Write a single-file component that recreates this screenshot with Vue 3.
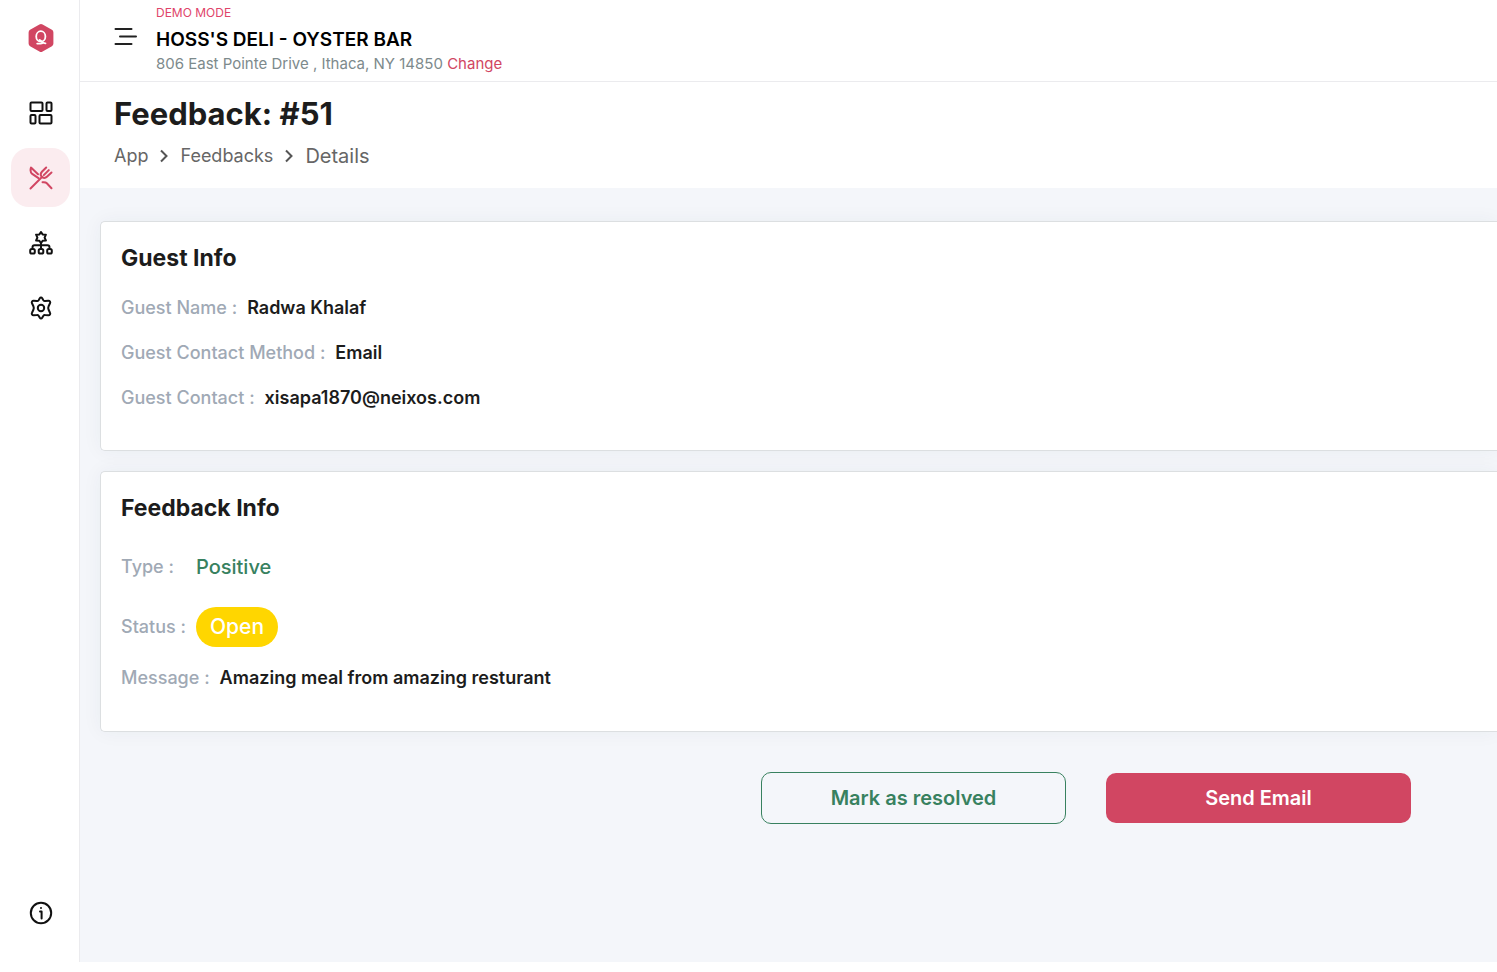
<template>
  <div class="page">
    <aside class="sidebar">
      <a href="#" class="logo" aria-label="Home">
        <svg width="28" height="30" viewBox="0 0 28 30">
          <path
            d="M12.4 1.6a3 3 0 0 1 3.2 0l9.3 5.2a3 3 0 0 1 1.5 2.6v11.2a3 3 0 0 1-1.5 2.6l-9.3 5.2a3 3 0 0 1-3.2 0l-9.3-5.2a3 3 0 0 1-1.5-2.6V9.4a3 3 0 0 1 1.5-2.6z"
            fill="#d14662"
          />
          <g fill="none" stroke="#fff" stroke-width="1.8" stroke-linecap="round">
            <ellipse cx="13.800" cy="13.400" rx="4.600" ry="5.200" />
            <path d="M10.200 20.600h3.600c1 0 1.800-.6 1.800-1.600M12.500 17c1.800 0 2.600 3.500 6 3.400" />
          </g>
        </svg>
      </a>
      <nav class="nav">
        <a href="#" class="nav-item" aria-label="Dashboard">
          <svg width="24" height="24" viewBox="0 0 24 24">
            <rect x="1.500" y="1.500" width="12" height="8.500" rx="1" />
            <rect x="17.500" y="1.500" width="5" height="8.500" rx="1" />
            <rect x="1.500" y="14" width="5" height="8.500" rx="1" />
            <rect x="10.500" y="14" width="12" height="8.500" rx="1" />
          </svg>
        </a>
        <a href="#" class="nav-item active" aria-label="Restaurant">
          <svg width="24" height="24" viewBox="0 0 24 24">
            <path d="M1.500 22.500 13 11" />
            <path d="m17.200 1.500-4.300 4.300c-1.500 1.600-1.500 3.600-.2 5s3.700 1.500 5.200 0l4.600-4.300" />
            <path d="m19.800 4.100-5 5" />
            <path d="M9.500 12.200 3.200 7.900C1.400 6.400 1.300 3.800 2 1.600l7 6.600" />
            <path d="M13.500 16.200c1.600.2 3.100-.2 4.300 1l4.700 5" />
          </svg>
        </a>
        <a href="#" class="nav-item" aria-label="Organization">
          <svg width="24" height="24" viewBox="0 0 24 24">
            <path
              d="m12 1 1.600 2.400 3.300.3-1.300 2.900 1.300 2.900-3.300.3L12 12.200l-1.600-2.400-3.300-.3 1.300-2.900-1.300-2.900 3.300-.3z"
            />
            <path d="M12 12v6M3.500 16.500c0-1.500.5-2.200 2-2.200h13c1.500 0 2 .7 2 2.200" />
            <rect x="1.200" y="18" width="4.600" height="4.600" rx="1.600" />
            <rect x="9.700" y="18" width="4.600" height="4.600" rx="1.600" />
            <rect x="18.200" y="18" width="4.600" height="4.600" rx="1.600" />
          </svg>
        </a>
        <a href="#" class="nav-item" aria-label="Settings">
          <svg width="24" height="24" viewBox="0 0 24 24">
            <path
              d="M10.800 2.200c.6-1 1.800-1 2.400 0l1.200 2c.4.600 1 .9 1.700.8l3.200-.3c1.500-.1 2.400 1.300 1.700 2.600l-1.400 2.900c-.4.900-.4 2.700 0 3.600l1.400 2.900c.7 1.300-.2 2.700-1.700 2.600l-3.200-.3c-.7-.1-1.300.2-1.700.8l-1.200 2c-.6 1-1.800 1-2.400 0l-1.200-2c-.4-.6-1-.9-1.700-.8l-3.200.3C3.200 19.400 2.300 18 3 16.700l1.400-2.900c.4-.9.4-2.700 0-3.600L3 7.300C2.300 6 3.200 4.600 4.700 4.700l3.200.3c.7.100 1.300-.2 1.700-.8z"
            />
            <circle cx="12" cy="12" r="3.200" />
          </svg>
        </a>
      </nav>
      <a href="#" class="nav-item info" aria-label="Information">
        <svg width="24" height="24" viewBox="0 0 24 24">
          <circle cx="12" cy="12" r="10.200" />
          <path d="M11 10.500h1.600V17.500M12 6.900v.2" />
        </svg>
      </a>
    </aside>

    <div class="main">
      <header class="topbar">
        <button type="button" class="menu-btn" aria-label="Toggle menu">
          <svg width="24" height="20" viewBox="0 0 24 20">
            <path d="M1.500 2h16M6 9.500h16M1.500 17h16" />
          </svg>
        </button>
        <div class="restaurant">
          <span class="mode">DEMO MODE</span>
          <strong class="name">HOSS'S DELI - OYSTER BAR</strong>
          <span class="address">
            806 East Pointe Drive , Ithaca, NY 14850
            <a href="#">Change</a>
          </span>
        </div>
      </header>

      <section class="title-bar">
        <h1>Feedback: #51</h1>
        <nav class="breadcrumb" aria-label="Breadcrumb">
          <a href="#">App</a>
          <svg width="8" height="14" viewBox="0 0 8 14"><path d="m1 1.500 5.500 5.500L1 12.500" /></svg>
          <a href="#">Feedbacks</a>
          <svg width="8" height="14" viewBox="0 0 8 14"><path d="m1 1.500 5.500 5.500L1 12.500" /></svg>
          <span class="current">Details</span>
        </nav>
      </section>

      <main class="content">
        <section class="card">
          <h2>Guest Info</h2>
          <dl class="guest">
            <div v-for="item in guest" :key="item.label" class="row">
              <dt>{{ item.label }} :</dt>
              <dd>{{ item.value }}</dd>
            </div>
          </dl>
        </section>

        <section class="card">
          <h2>Feedback Info</h2>
          <dl class="feedback">
            <div class="row type">
              <dt>Type :</dt>
              <dd class="positive">{{ feedback.type }}</dd>
            </div>
            <div class="row status">
              <dt>Status :</dt>
              <dd class="badge">{{ feedback.status }}</dd>
            </div>
            <div class="row">
              <dt>Message :</dt>
              <dd>{{ feedback.message }}</dd>
            </div>
          </dl>
        </section>

        <div class="actions">
          <button type="button" class="btn outline">Mark as resolved</button>
          <button type="button" class="btn primary">Send Email</button>
        </div>
      </main>
    </div>
  </div>
</template>

<script setup>
import { reactive } from "vue";

const guest = [
  { label: "Guest Name", value: "Radwa Khalaf" },
  { label: "Guest Contact Method", value: "Email" },
  { label: "Guest Contact", value: "xisapa1870@neixos.com" },
];

const feedback = reactive({
  type: "Positive",
  status: "Open",
  message: "Amazing meal from amazing resturant",
});
</script>

<style>
body {
  background: #fff;
}
</style>

<style scoped>
.page {
  display: flex;
  box-sizing: border-box;
  min-height: 100vh;
  padding-bottom: 10px;
  font-family: Inter, sans-serif;
  color: #1c1c1c;
}

a {
  color: inherit;
  text-decoration: none;
}

svg {
  display: block;
  fill: none;
}

/* sidebar */
.sidebar {
  display: flex;
  flex-direction: column;
  align-items: center;
  box-sizing: border-box;
  flex: 0 0 80px;
  padding: 23px 0 20px 2px;
  border-right: 1px solid #ebebee;
  background: #fff;
}

.nav {
  display: grid;
  gap: 6px;
  margin-top: 30px;
}

.nav-item {
  display: grid;
  place-items: center;
  width: 59px;
  height: 59px;
  border-radius: 18px;
  color: #111;
}

.nav-item svg {
  stroke: currentColor;
  stroke-width: 2;
  stroke-linecap: round;
  stroke-linejoin: round;
}

.nav-item.active {
  background: #fbecef;
  color: #d14662;
}

.info {
  margin-top: auto;
}

/* header */
.main {
  display: flex;
  flex-direction: column;
  flex: 1;
  min-width: 0;
}

.topbar {
  display: flex;
  gap: 18px;
  box-sizing: border-box;
  height: 82px;
  padding: 4px 34px 0;
  border-bottom: 1px solid #ebebee;
}

.menu-btn {
  align-self: flex-start;
  margin-top: 23px;
  padding: 0;
  border: 0;
  background: none;
  cursor: pointer;
}

.menu-btn svg {
  stroke: #222;
  stroke-width: 2;
  stroke-linecap: round;
}

.restaurant {
  display: flex;
  flex-direction: column;
}

.mode {
  font-size: 12px;
  line-height: 18px;
  color: #e0446a;
}

.name {
  font-size: 19px;
  font-weight: 600;
  line-height: 36px;
  color: #000;
}

.address {
  font-size: 15px;
  line-height: 12px;
  color: #7d8a8c;
}

.address a {
  color: #d14662;
}

.title-bar {
  padding: 12px 34px 20px;
}

h1 {
  margin: 0;
  font-size: 31px;
  font-weight: 700;
  line-height: 40px;
}

.breadcrumb {
  display: flex;
  align-items: center;
  gap: 12px;
  margin-top: 10px;
  font-size: 18px;
  line-height: 24px;
  color: #666;
}

.breadcrumb svg {
  stroke: #555;
  stroke-width: 2;
}

.current {
  font-size: 20px;
}

/* cards */
.content {
  flex: 1;
  padding: 33px 0 0 20px;
  background: #f4f6fa;
}

.card {
  margin-bottom: 20px;
  padding: 20px;
  border: 1px solid #dcdfe1;
  border-right: 0;
  border-radius: 5px 0 0 5px;
  background: #fff;
  box-shadow: 0 0 20px rgba(40, 50, 70, 0.05);
}

h2 {
  margin: 0;
  font-size: 23px;
  font-weight: 700;
  line-height: 32px;
}

dl {
  margin: 0;
}

.guest {
  display: grid;
  gap: 17px;
  padding: 20px 0 18px;
}

.feedback {
  padding: 29px 0 19px;
}

.row {
  display: flex;
  align-items: center;
  gap: 10px;
  font-size: 18px;
  line-height: 28px;
}

.row.type {
  gap: 22px;
}

.row.status {
  margin: 26px 0 17px;
}

dt {
  font-weight: 500;
  color: #a0a9b5;
}

dd {
  margin: 0;
  font-weight: 600;
}

dd.positive {
  font-size: 20px;
  font-weight: 500;
  color: #38815f;
}

dd.badge {
  padding: 6px 14px;
  border-radius: 20px;
  background: #ffd600;
  font-size: 21px;
  font-weight: 500;
  color: #fff;
}

/* actions */
.actions {
  display: flex;
  justify-content: flex-end;
  align-items: center;
  gap: 40px;
  padding: 20px 86px 40px 0;
}

.btn {
  box-sizing: border-box;
  width: 305px;
  height: 52px;
  border: 1px solid #38815f;
  border-radius: 10px;
  background: transparent;
  font-family: inherit;
  font-size: 20px;
  font-weight: 600;
  color: #38815f;
  cursor: pointer;
}

.btn.primary {
  height: 50px;
  border: 0;
  background: #d14662;
  color: #fff;
}
</style>
